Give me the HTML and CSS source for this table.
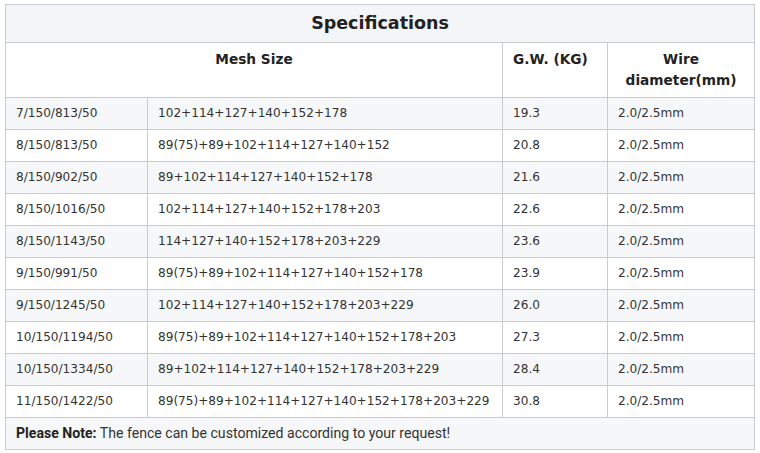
FILE: index.html
```html
<!DOCTYPE html>
<html>
<head>
<meta charset="utf-8">
<link rel="stylesheet" href="styles.css">
</head>
<body>
<table class="spec">
  <colgroup>
    <col class="c1"><col class="c2"><col class="c3"><col class="c4">
  </colgroup>
  <thead>
    <tr><th colspan="4" class="title">Specifications</th></tr>
    <tr class="heads">
      <th colspan="2">Mesh Size</th>
      <th class="left">G.W. (KG)</th>
      <th>Wire diameter(mm)</th>
    </tr>
  </thead>
  <tbody>
    <tr><td>7/150/813/50</td><td>102+114+127+140+152+178</td><td>19.3</td><td>2.0/2.5mm</td></tr>
    <tr><td>8/150/813/50</td><td>89(75)+89+102+114+127+140+152</td><td>20.8</td><td>2.0/2.5mm</td></tr>
    <tr><td>8/150/902/50</td><td>89+102+114+127+140+152+178</td><td>21.6</td><td>2.0/2.5mm</td></tr>
    <tr><td>8/150/1016/50</td><td>102+114+127+140+152+178+203</td><td>22.6</td><td>2.0/2.5mm</td></tr>
    <tr><td>8/150/1143/50</td><td>114+127+140+152+178+203+229</td><td>23.6</td><td>2.0/2.5mm</td></tr>
    <tr><td>9/150/991/50</td><td>89(75)+89+102+114+127+140+152+178</td><td>23.9</td><td>2.0/2.5mm</td></tr>
    <tr><td>9/150/1245/50</td><td>102+114+127+140+152+178+203+229</td><td>26.0</td><td>2.0/2.5mm</td></tr>
    <tr><td>10/150/1194/50</td><td>89(75)+89+102+114+127+140+152+178+203</td><td>27.3</td><td>2.0/2.5mm</td></tr>
    <tr><td>10/150/1334/50</td><td>89+102+114+127+140+152+178+203+229</td><td>28.4</td><td>2.0/2.5mm</td></tr>
    <tr><td>11/150/1422/50</td><td>89(75)+89+102+114+127+140+152+178+203+229</td><td>30.8</td><td>2.0/2.5mm</td></tr>
    <tr class="note"><td colspan="4"><strong>Please Note:</strong> The fence can be customized according to your request!</td></tr>
  </tbody>
</table>
</body>
</html>
```
FILE: styles.css
```css
html, body {
  background: #ffffff;
}
body {
  margin: 4px 5px;
  font-family: "DejaVu Sans", Verdana, sans-serif;
  color: #333333;
}
.spec {
  border-collapse: collapse;
  table-layout: fixed;
  width: 749px;
}
.c1 { width: 142px; }
.c2 { width: 355px; }
.c3 { width: 105px; }
.c4 { width: 147px; }
.spec th,
.spec td {
  border: 1px solid #c8ccd1;
  padding: 5px 10px;
  line-height: 21px;
  text-align: left;
  vertical-align: top;
}
.spec th {
  font-weight: bold;
  font-size: 13.7px;
  color: #222222;
  text-align: center;
}
.spec th.title {
  font-size: 17.5px;
  line-height: 27px;
  background: #f4f5f7;
  padding: 5px 10px;
}
.heads th {
  padding: 6px 10px;
  background: #ffffff;
}
.heads th.left {
  text-align: left;
}
.spec td {
  font-size: 12.1px;
  padding-left: 10px;
}
.spec tbody tr:nth-child(odd) td {
  background: #f6f7f8;
}
.spec tbody tr:nth-child(even) td {
  background: #ffffff;
}
.spec tr.note td {
  font-family: Roboto, "Liberation Sans", sans-serif;
  font-size: 14.1px;
  color: #333333;
  background: #f6f7f8;
}
.note strong {
  color: #222222;
}
```
